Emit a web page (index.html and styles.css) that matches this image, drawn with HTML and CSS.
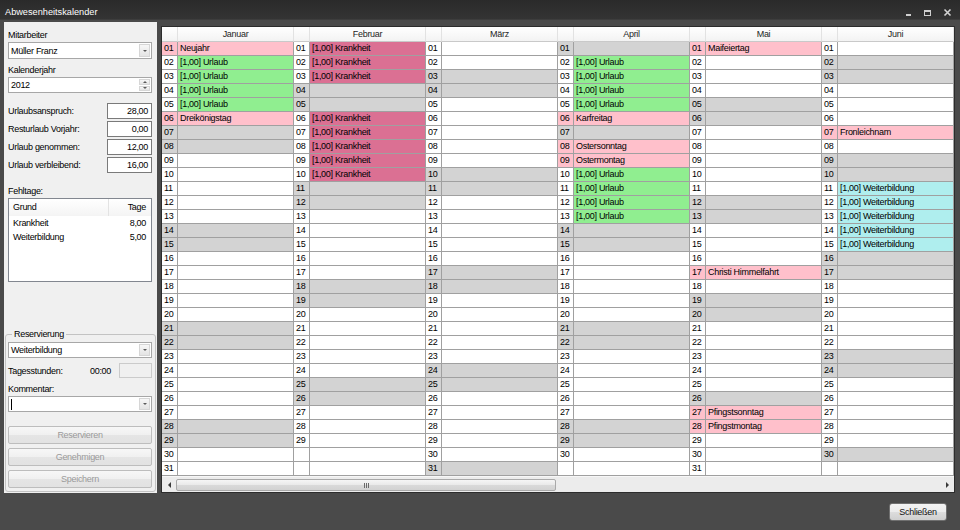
FILE: index.html
```html
<!DOCTYPE html>
<html lang="de">
<head>
<meta charset="utf-8">
<title>Abwesenheitskalender</title>
<link rel="stylesheet" href="styles.css">
</head>
<body>
<div class="window">
  <header class="titlebar">
    <span class="title">Abwesenheitskalender</span>
    <svg class="controls" width="52" height="20" viewBox="0 0 52 20">
      <rect x="6" y="14" width="5" height="2" fill="#cfcfcf"/>
      <rect x="24.5" y="10.5" width="6" height="5" fill="none" stroke="#cfcfcf" stroke-width="1"/>
      <rect x="24" y="10" width="7" height="2" fill="#cfcfcf"/>
      <path d="M44.5 9.5 L50.5 15.5 M50.5 9.5 L44.5 15.5" stroke="#d4d4d4" stroke-width="1.6" fill="none"/>
    </svg>
  </header>

  <div class="main">
    <aside class="panel">
      <div class="lbl">Mitarbeiter</div>
      <div class="combo c-top"><span class="val">Müller Franz</span><span class="dd"><i class="ar-d"></i></span></div>
      <div class="lbl l-year">Kalenderjahr</div>
      <div class="combo c-num"><span class="val">2012</span><span class="spin"><span><i class="ar-u"></i></span><span><i class="ar-d"></i></span></span></div>

      <div class="fields">
        <div class="field"><span>Urlaubsanspruch:</span><span class="num">28,00</span></div>
        <div class="field"><span>Resturlaub Vorjahr:</span><span class="num">0,00</span></div>
        <div class="field"><span>Urlaub genommen:</span><span class="num">12,00</span></div>
        <div class="field"><span>Urlaub verbleibend:</span><span class="num">16,00</span></div>
      </div>

      <div class="lbl l-fehl">Fehltage:</div>
      <div class="list">
        <div class="lh"><span class="c1">Grund</span><span class="c2">Tage</span></div>
        <div class="lr"><span class="c1">Krankheit</span><span class="c2">8,00</span></div>
        <div class="lr"><span class="c1">Weiterbildung</span><span class="c2">5,00</span></div>
      </div>

      <fieldset class="group">
        <legend>Reservierung</legend>
        <div class="combo c-small"><span class="val">Weiterbildung</span><span class="dd"><i class="ar-d"></i></span></div>
        <div class="hours"><span class="hl">Tagesstunden:</span><span class="time">00:00</span><span class="box"></span></div>
        <div class="lbl l-komm">Kommentar:</div>
        <div class="combo c-small"><span class="val"><span class="caret"></span></span><span class="dd"><i class="ar-d"></i></span></div>
        <div class="buttons">
          <button class="btn" disabled>Reservieren</button>
          <button class="btn" disabled>Genehmigen</button>
          <button class="btn" disabled>Speichern</button>
        </div>
      </fieldset>
    </aside>

    <section class="grid">
      <div class="cal">
        <div class="hd"></div><div class="hd m">Januar</div>
        <div class="hd"></div><div class="hd m">Februar</div>
        <div class="hd"></div><div class="hd m">März</div>
        <div class="hd"></div><div class="hd m">April</div>
        <div class="hd"></div><div class="hd m">Mai</div>
        <div class="hd"></div><div class="hd m">Juni</div>

        <div class="d h">01</div><div class="t h">Neujahr</div><div class="d">01</div><div class="t k">[1,00] Krankheit</div><div class="d">01</div><div class="t"></div><div class="d w">01</div><div class="t w"></div><div class="d h">01</div><div class="t h">Maifeiertag</div><div class="d">01</div><div class="t"></div>
        <div class="d">02</div><div class="t u">[1,00] Urlaub</div><div class="d">02</div><div class="t k">[1,00] Krankheit</div><div class="d">02</div><div class="t"></div><div class="d">02</div><div class="t u">[1,00] Urlaub</div><div class="d">02</div><div class="t"></div><div class="d w">02</div><div class="t w"></div>
        <div class="d">03</div><div class="t u">[1,00] Urlaub</div><div class="d">03</div><div class="t k">[1,00] Krankheit</div><div class="d w">03</div><div class="t w"></div><div class="d">03</div><div class="t u">[1,00] Urlaub</div><div class="d">03</div><div class="t"></div><div class="d w">03</div><div class="t w"></div>
        <div class="d">04</div><div class="t u">[1,00] Urlaub</div><div class="d w">04</div><div class="t w"></div><div class="d w">04</div><div class="t w"></div><div class="d">04</div><div class="t u">[1,00] Urlaub</div><div class="d">04</div><div class="t"></div><div class="d">04</div><div class="t"></div>
        <div class="d">05</div><div class="t u">[1,00] Urlaub</div><div class="d w">05</div><div class="t w"></div><div class="d">05</div><div class="t"></div><div class="d">05</div><div class="t u">[1,00] Urlaub</div><div class="d w">05</div><div class="t w"></div><div class="d">05</div><div class="t"></div>
        <div class="d h">06</div><div class="t h">Dreikönigstag</div><div class="d">06</div><div class="t k">[1,00] Krankheit</div><div class="d">06</div><div class="t"></div><div class="d h">06</div><div class="t h">Karfreitag</div><div class="d w">06</div><div class="t w"></div><div class="d">06</div><div class="t"></div>
        <div class="d w">07</div><div class="t w"></div><div class="d">07</div><div class="t k">[1,00] Krankheit</div><div class="d">07</div><div class="t"></div><div class="d w">07</div><div class="t w"></div><div class="d">07</div><div class="t"></div><div class="d h">07</div><div class="t h">Fronleichnam</div>
        <div class="d w">08</div><div class="t w"></div><div class="d">08</div><div class="t k">[1,00] Krankheit</div><div class="d">08</div><div class="t"></div><div class="d h">08</div><div class="t h">Ostersonntag</div><div class="d">08</div><div class="t"></div><div class="d">08</div><div class="t"></div>
        <div class="d">09</div><div class="t"></div><div class="d">09</div><div class="t k">[1,00] Krankheit</div><div class="d">09</div><div class="t"></div><div class="d h">09</div><div class="t h">Ostermontag</div><div class="d">09</div><div class="t"></div><div class="d w">09</div><div class="t w"></div>
        <div class="d">10</div><div class="t"></div><div class="d">10</div><div class="t k">[1,00] Krankheit</div><div class="d w">10</div><div class="t w"></div><div class="d">10</div><div class="t u">[1,00] Urlaub</div><div class="d">10</div><div class="t"></div><div class="d w">10</div><div class="t w"></div>
        <div class="d">11</div><div class="t"></div><div class="d w">11</div><div class="t w"></div><div class="d w">11</div><div class="t w"></div><div class="d">11</div><div class="t u">[1,00] Urlaub</div><div class="d">11</div><div class="t"></div><div class="d">11</div><div class="t b">[1,00] Weiterbildung</div>
        <div class="d">12</div><div class="t"></div><div class="d w">12</div><div class="t w"></div><div class="d">12</div><div class="t"></div><div class="d">12</div><div class="t u">[1,00] Urlaub</div><div class="d w">12</div><div class="t w"></div><div class="d">12</div><div class="t b">[1,00] Weiterbildung</div>
        <div class="d">13</div><div class="t"></div><div class="d">13</div><div class="t"></div><div class="d">13</div><div class="t"></div><div class="d">13</div><div class="t u">[1,00] Urlaub</div><div class="d w">13</div><div class="t w"></div><div class="d">13</div><div class="t b">[1,00] Weiterbildung</div>
        <div class="d w">14</div><div class="t w"></div><div class="d">14</div><div class="t"></div><div class="d">14</div><div class="t"></div><div class="d w">14</div><div class="t w"></div><div class="d">14</div><div class="t"></div><div class="d">14</div><div class="t b">[1,00] Weiterbildung</div>
        <div class="d w">15</div><div class="t w"></div><div class="d">15</div><div class="t"></div><div class="d">15</div><div class="t"></div><div class="d w">15</div><div class="t w"></div><div class="d">15</div><div class="t"></div><div class="d">15</div><div class="t b">[1,00] Weiterbildung</div>
        <div class="d">16</div><div class="t"></div><div class="d">16</div><div class="t"></div><div class="d">16</div><div class="t"></div><div class="d">16</div><div class="t"></div><div class="d">16</div><div class="t"></div><div class="d w">16</div><div class="t w"></div>
        <div class="d">17</div><div class="t"></div><div class="d">17</div><div class="t"></div><div class="d w">17</div><div class="t w"></div><div class="d">17</div><div class="t"></div><div class="d h">17</div><div class="t h">Christi Himmelfahrt</div><div class="d w">17</div><div class="t w"></div>
        <div class="d">18</div><div class="t"></div><div class="d w">18</div><div class="t w"></div><div class="d w">18</div><div class="t w"></div><div class="d">18</div><div class="t"></div><div class="d">18</div><div class="t"></div><div class="d">18</div><div class="t"></div>
        <div class="d">19</div><div class="t"></div><div class="d w">19</div><div class="t w"></div><div class="d">19</div><div class="t"></div><div class="d">19</div><div class="t"></div><div class="d w">19</div><div class="t w"></div><div class="d">19</div><div class="t"></div>
        <div class="d">20</div><div class="t"></div><div class="d">20</div><div class="t"></div><div class="d">20</div><div class="t"></div><div class="d">20</div><div class="t"></div><div class="d w">20</div><div class="t w"></div><div class="d">20</div><div class="t"></div>
        <div class="d w">21</div><div class="t w"></div><div class="d">21</div><div class="t"></div><div class="d">21</div><div class="t"></div><div class="d w">21</div><div class="t w"></div><div class="d">21</div><div class="t"></div><div class="d">21</div><div class="t"></div>
        <div class="d w">22</div><div class="t w"></div><div class="d">22</div><div class="t"></div><div class="d">22</div><div class="t"></div><div class="d w">22</div><div class="t w"></div><div class="d">22</div><div class="t"></div><div class="d">22</div><div class="t"></div>
        <div class="d">23</div><div class="t"></div><div class="d">23</div><div class="t"></div><div class="d">23</div><div class="t"></div><div class="d">23</div><div class="t"></div><div class="d">23</div><div class="t"></div><div class="d w">23</div><div class="t w"></div>
        <div class="d">24</div><div class="t"></div><div class="d">24</div><div class="t"></div><div class="d w">24</div><div class="t w"></div><div class="d">24</div><div class="t"></div><div class="d">24</div><div class="t"></div><div class="d w">24</div><div class="t w"></div>
        <div class="d">25</div><div class="t"></div><div class="d w">25</div><div class="t w"></div><div class="d w">25</div><div class="t w"></div><div class="d">25</div><div class="t"></div><div class="d">25</div><div class="t"></div><div class="d">25</div><div class="t"></div>
        <div class="d">26</div><div class="t"></div><div class="d w">26</div><div class="t w"></div><div class="d">26</div><div class="t"></div><div class="d">26</div><div class="t"></div><div class="d w">26</div><div class="t w"></div><div class="d">26</div><div class="t"></div>
        <div class="d">27</div><div class="t"></div><div class="d">27</div><div class="t"></div><div class="d">27</div><div class="t"></div><div class="d">27</div><div class="t"></div><div class="d h">27</div><div class="t h">Pfingstsonntag</div><div class="d">27</div><div class="t"></div>
        <div class="d w">28</div><div class="t w"></div><div class="d">28</div><div class="t"></div><div class="d">28</div><div class="t"></div><div class="d w">28</div><div class="t w"></div><div class="d h">28</div><div class="t h">Pfingstmontag</div><div class="d">28</div><div class="t"></div>
        <div class="d w">29</div><div class="t w"></div><div class="d">29</div><div class="t"></div><div class="d">29</div><div class="t"></div><div class="d w">29</div><div class="t w"></div><div class="d">29</div><div class="t"></div><div class="d">29</div><div class="t"></div>
        <div class="d">30</div><div class="t"></div><div class="d"></div><div class="t"></div><div class="d">30</div><div class="t"></div><div class="d">30</div><div class="t"></div><div class="d">30</div><div class="t"></div><div class="d w">30</div><div class="t w"></div>
        <div class="d">31</div><div class="t"></div><div class="d"></div><div class="t"></div><div class="d w">31</div><div class="t w"></div><div class="d"></div><div class="t"></div><div class="d">31</div><div class="t"></div><div class="d"></div><div class="t"></div>
      </div>
      <div class="hscroll">
        <span class="sb-arrow"><i class="ar-l"></i></span>
        <span class="thumb"><i class="grip"></i></span>
        <span class="track"></span>
        <span class="sb-arrow"><i class="ar-r"></i></span>
      </div>
    </section>
  </div>

  <footer class="footer">
    <button class="close-btn">Schließen</button>
  </footer>
</div>
</body>
</html>
```

FILE: styles.css
```css
* { box-sizing: border-box; }

html, body {
  margin: 0;
  padding: 0;
}

body {
  width: 960px;
  height: 530px;
  overflow: hidden;
  background: #4a4a4a;
  font-family: "Liberation Sans", Arial, sans-serif;
  font-size: 9px;
  letter-spacing: -0.3px;
  color: #000;
}

.window {
  width: 960px;
  height: 530px;
  display: flex;
  flex-direction: column;
  background: #4a4a4a;
}

/* title bar */
.titlebar {
  flex: none;
  height: 20px;
  display: flex;
  align-items: center;
  justify-content: space-between;
  padding: 0 8px 0 5px;
  background: linear-gradient(#2a2a2a, #343434);
  border-bottom: 1px solid #3d3d3d;
  color: #fff;
  font-size: 9.2px;
  letter-spacing: 0;
}

.title { margin-top: 4px; }

.controls { display: block; }

/* main area */
.main {
  flex: none;
  height: 473px;
  display: flex;
  gap: 4px;
  padding: 2px 5px 0 4px;
}

/* left panel */
.panel {
  flex: none;
  width: 153px;
  height: 471px;
  background: #f0f0f0;
  display: flex;
  flex-direction: column;
  padding: 7px 5px 0 4px;
}

.lbl {
  line-height: 12px;
  height: 12px;
  white-space: nowrap;
}

.l-year { margin-top: 5px; }
.l-fehl { margin-top: 12px; }
.l-komm { margin-top: 5px; }

.combo {
  height: 17px;
  background: #fff;
  border: 1px solid #a7a7a7;
  display: flex;
  align-items: stretch;
  margin-top: 1px;
}

.combo.c-num,
.combo.c-small { height: 16px; }

.combo .val {
  flex: 1;
  padding-left: 2px;
  display: flex;
  align-items: center;
  white-space: nowrap;
}

.combo .dd {
  width: 11px;
  margin: 1px;
  border: 1px solid #d6d6d6;
  background: linear-gradient(#f7f7f7, #e4e4e4);
  display: flex;
  align-items: center;
  justify-content: center;
}

.combo .spin {
  width: 11px;
  margin: 1px;
  display: flex;
  flex-direction: column;
  gap: 1px;
}

.combo .spin > span {
  flex: 1;
  border: 1px solid #d6d6d6;
  background: linear-gradient(#f7f7f7, #e4e4e4);
  display: flex;
  align-items: center;
  justify-content: center;
}

.ar-d, .ar-u, .ar-l, .ar-r {
  display: block;
  width: 0;
  height: 0;
}

.ar-d {
  border-left: 2px solid transparent;
  border-right: 2px solid transparent;
  border-top: 2px solid #5a5a5a;
}

.ar-u {
  border-left: 2px solid transparent;
  border-right: 2px solid transparent;
  border-bottom: 2px solid #5a5a5a;
}

.ar-l {
  border-top: 3px solid transparent;
  border-bottom: 3px solid transparent;
  border-right: 3px solid #3a3a3a;
}

.ar-r {
  border-top: 3px solid transparent;
  border-bottom: 3px solid transparent;
  border-left: 3px solid #3a3a3a;
}

.caret {
  display: block;
  width: 1px;
  height: 11px;
  background: #000;
}

/* number fields */
.fields {
  margin-top: 10px;
  display: flex;
  flex-direction: column;
  gap: 2px;
}

.field {
  height: 16px;
  display: flex;
  align-items: center;
  justify-content: space-between;
  white-space: nowrap;
}

.num {
  width: 45px;
  height: 16px;
  border: 1px solid #7a7a7a;
  background: #fff;
  text-align: right;
  padding-right: 3px;
  line-height: 14px;
}

/* list view */
.list {
  margin-top: 1px;
  height: 84px;
  border: 1px solid #828790;
  background: #fff;
}

.lh, .lr {
  display: flex;
  white-space: nowrap;
}

.lh {
  height: 17px;
  line-height: 17px;
  background: linear-gradient(#ffffff, #f4f4f4);
}

.lr {
  height: 14px;
  line-height: 14px;
}

.c1 {
  width: 100px;
  padding-left: 4px;
}

.lh .c1 { border-right: 1px solid #e3e3e3; }

.c2 {
  flex: 1;
  text-align: right;
  padding-right: 5px;
}

/* group box */
.group {
  margin: auto -4px 1px -3px;
  padding: 2px 3px 3px 2px;
  border: 1px solid #c3c3c3;
  border-radius: 3px;
  min-width: 0;
}

.group legend {
  margin-left: 4px;
  padding: 0 2px;
  line-height: 12px;
}

.group .c-small:first-of-type { margin-top: 0; }

.hours {
  margin-top: 5px;
  height: 15px;
  display: flex;
  align-items: center;
  white-space: nowrap;
}

.hours .hl { flex: 1; }

.hours .box {
  width: 33px;
  height: 15px;
  margin-left: 8px;
  border: 1px solid #cbcbcb;
  background: #f0f0f0;
}

.buttons {
  margin-top: 14px;
  display: flex;
  flex-direction: column;
  gap: 4px;
}

.btn {
  display: block;
  width: 100%;
  height: 18px;
  padding: 0;
  border: 1px solid #bdbdbd;
  border-radius: 2px;
  background: linear-gradient(#f7f7f7 0%, #f0f0f0 50%, #e5e5e5 51%, #e2e2e2 100%);
  color: #9a9a9a;
  font: inherit;
  letter-spacing: inherit;
  line-height: 16px;
}

/* calendar grid */
.grid {
  flex: none;
  width: 794px;
  height: 467px;
  margin-top: 4px;
  border: 1px solid #2c2c2c;
  background: #fff;
  display: flex;
  flex-direction: column;
}

.cal {
  display: grid;
  grid-template-columns: repeat(6, 16px 116px);
  grid-template-rows: 15px;
  grid-auto-rows: 14px;
}

.cal > div {
  border-right: 1px solid #a0a0a0;
  border-bottom: 1px solid #a0a0a0;
  line-height: 13px;
  padding-left: 2px;
  white-space: nowrap;
  overflow: hidden;
}

.cal > .d { padding-left: 2px; }

.cal > .hd {
  background: linear-gradient(#ffffff, #f3f3f3);
  border-right: 1px solid #e2e2e2;
  border-bottom: 1px solid #c9c9c9;
  line-height: 14px;
  text-align: center;
  padding-left: 0;
  color: #1e1e1e;
}

.w { background: #d3d3d3; }
.h { background: #ffc0cb; }
.u { background: #90ee90; }
.k { background: #db7093; }
.b { background: #afeeee; }

/* horizontal scrollbar */
.hscroll {
  height: 16px;
  display: flex;
  align-items: stretch;
  background: #ececec;
  border-top: 1px solid #f7f7f7;
}

.sb-arrow {
  width: 14px;
  display: flex;
  align-items: center;
  justify-content: center;
}

.thumb {
  width: 380px;
  margin: 2px 0 1px;
  border: 1px solid #a9a9a9;
  border-radius: 2px;
  background: linear-gradient(#f6f6f6, #e9e9e9 50%, #dadada 51%, #d2d2d2);
  display: flex;
  align-items: center;
  justify-content: center;
}

.grip {
  display: block;
  width: 5px;
  height: 5px;
  background: repeating-linear-gradient(90deg, #6a6a6a 0 1px, transparent 1px 2px);
}

.track { flex: 1; }

/* footer */
.footer {
  flex: 1;
  display: flex;
  justify-content: flex-end;
  align-items: flex-start;
  padding: 10px 13px 0 0;
}

.close-btn {
  width: 58px;
  height: 18px;
  padding: 0;
  border: 1px solid #707070;
  border-radius: 3px;
  background: linear-gradient(#f3f3f3 0%, #ebebeb 50%, #dddddd 51%, #cfcfcf 100%);
  color: #111;
  font: inherit;
  letter-spacing: inherit;
  line-height: 16px;
}
```
